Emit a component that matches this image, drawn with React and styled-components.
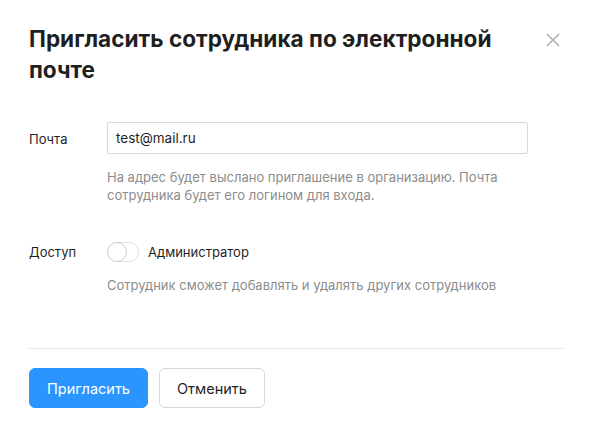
import styled, { createGlobalStyle } from "styled-components"

const GlobalStyle = createGlobalStyle`
  body {
    margin: 0;
    background: #fff;
    font-family: Inter, "Noto Sans", sans-serif;
    color: #1f1f1f;
  }
`

const App = () => {
  return (
    <>
      <GlobalStyle />
      <Modal>
        <Header>
          <Title>Пригласить сотрудника по электронной почте</Title>
          <Close aria-label="Закрыть">
            <svg width="14" height="14" viewBox="0 0 14 14">
              <path d="M1 1L13 13M13 1L1 13" stroke="#a6a6a6" strokeWidth="1.3" />
            </svg>
          </Close>
        </Header>

        <Field>
          <Label $pad={7}>Почта</Label>
          <Control>
            <Input type="text" defaultValue="test@mail.ru" />
            <Hint>На адрес будет выслано приглашение в организацию. Почта сотрудника будет его логином для входа.</Hint>
          </Control>
        </Field>

        <Field $top={38}>
          <Label>Доступ</Label>
          <Control>
            <SwitchRow>
              <Switch />
              <SwitchText>Администратор</SwitchText>
            </SwitchRow>
            <Hint $top={14}>Сотрудник сможет добавлять и удалять других сотрудников</Hint>
          </Control>
        </Field>

        <Divider />

        <Footer>
          <Button $primary>Пригласить</Button>
          <Button>Отменить</Button>
        </Footer>
      </Modal>
    </>
  )
}

const Modal = styled.div`
  width: 589px;
  height: 425px;
  box-sizing: border-box;
  padding: 23px 26px 0 29px;
  background: #fff;
`

const Header = styled.div`
  display: flex;
  justify-content: space-between;
  align-items: flex-start;
`

const Title = styled.h2`
  margin: 0;
  width: 500px;
  font-size: 22.6px;
  line-height: 31px;
  font-weight: 700;
  color: #1f1f1f;
`

const Close = styled.button`
  border: 0 none;
  background: transparent;
  padding: 0;
  margin: 10px 3px 0 0;
  width: 14px;
  height: 14px;
  display: flex;
  cursor: pointer;
`

const Field = styled.div`
  display: flex;
  margin-top: ${p => p.$top || 37}px;
`

const Label = styled.div`
  width: 78px;
  flex: none;
  font-size: 13px;
  line-height: 20px;
  padding-top: ${p => p.$pad || 0}px;
  color: #1f1f1f;
`

const Control = styled.div`
  width: 421px;
`

const Input = styled.input`
  display: block;
  width: 100%;
  box-sizing: border-box;
  height: 32px;
  border: 1px solid #d9d9d9;
  border-radius: 2px;
  padding: 0 8px;
  font-family: inherit;
  font-size: 13.5px;
  color: #1f1f1f;
  outline: 0 none;
`

const Hint = styled.div`
  margin-top: ${p => p.$top || 14}px;
  font-size: 13px;
  line-height: 18px;
  color: #8c8c8c;
`

const SwitchRow = styled.div`
  display: flex;
  align-items: center;
  gap: 9px;
  height: 20px;
`

const Switch = styled.span`
  width: 32px;
  height: 20px;
  box-sizing: border-box;
  border: 1px solid #dedede;
  border-radius: 10px;
  position: relative;

  &::after {
    content: "";
    position: absolute;
    left: -1px;
    top: -1px;
    width: 20px;
    height: 20px;
    border-radius: 50%;
    box-sizing: border-box;
    border: 1px solid #cfcfcf;
    background: #fff;
  }
`

const SwitchText = styled.span`
  font-size: 13px;
  color: #1f1f1f;
`

const Divider = styled.div`
  height: 1px;
  background: #e3e3e3;
  margin-top: 54px;
`

const Footer = styled.div`
  display: flex;
  gap: 11px;
  margin-top: 19px;
`

const Button = styled.button`
  height: 40px;
  box-sizing: border-box;
  padding: 0 17px;
  border-radius: 6px;
  font-family: Inter, sans-serif;
  font-size: 14.5px;
  cursor: pointer;
  border: 1px solid ${p => p.$primary ? "#2a95ff" : "#d9d9d9"};
  background: ${p => p.$primary ? "#2a95ff" : "#fff"};
  color: ${p => p.$primary ? "#fff" : "#1f1f1f"};
`

export default App
